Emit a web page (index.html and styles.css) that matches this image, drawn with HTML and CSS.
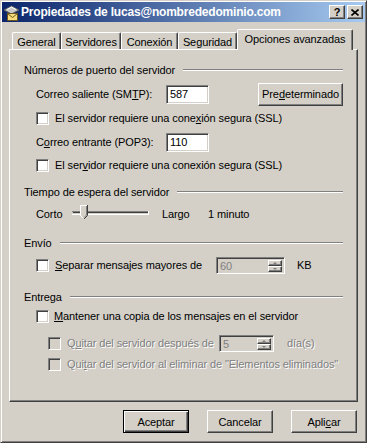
FILE: index.html
```html
<!DOCTYPE html>
<html lang="es">
<head>
<meta charset="utf-8">
<title>Propiedades</title>
<link rel="stylesheet" href="styles.css">
</head>
<body>
<div class="window">
  <div class="titlebar">
    <svg class="ticon" width="17" height="17" viewBox="0 0 17 17">
      <path d="M1 6 L8.5 2 L16 6 L8.5 10 Z" fill="#c8c8c8" stroke="#5a5a5a"/>
      <path d="M4 5.5 L8.5 3.2 L13 5.5" fill="none" stroke="#ffffff"/>
      <rect x="4.5" y="9.5" width="10" height="7" fill="#f6dc7a" stroke="#6a5520"/>
      <path d="M4.5 9.5 L9.5 13.5 L14.5 9.5" fill="none" stroke="#6a5520"/>
    </svg>
    <span class="title">Propiedades de lucas@nombrededominio.com</span>
    <div class="tbtns">
      <span class="tbtn">?</span>
      <span class="tbtn">
        <svg width="8" height="7" viewBox="0 0 8 7"><path d="M0.5 0.5 L7.5 6.5 M7.5 0.5 L0.5 6.5" stroke="#000" stroke-width="1.6"/></svg>
      </span>
    </div>
  </div>

  <div class="tabs">
    <div class="tab w-gen">General</div>
    <div class="tab w-srv">Servidores</div>
    <div class="tab w-con">Conexión</div>
    <div class="tab w-seg">Seguridad</div>
    <div class="tab sel w-opc">Opciones avanzadas</div>
  </div>

  <div class="panel">
    <div class="group">
      <div class="ghead"><span>Números de puerto del servidor</span><i class="gline"></i></div>
      <div class="row h24 mt4 ind1">
        <span class="lbl w130">Correo saliente (SM<u>T</u>P):</span>
        <span class="field">587</span>
        <span class="btn pre">Pre<u>d</u>eterminado</span>
      </div>
      <div class="row h24 ind1">
        <span class="cb"></span><span class="cbl">El servidor requiere una cone<u>x</u>ión segura (SSL)</span>
      </div>
      <div class="row h24 ind1">
        <span class="lbl w130">C<u>o</u>rreo entrante (POP3):</span>
        <span class="field">110</span>
      </div>
      <div class="row h22 ind1">
        <span class="cb"></span><span class="cbl">El ser<u>v</u>idor requiere una conexión segura (SSL)</span>
      </div>
    </div>

    <div class="group mt8">
      <div class="ghead"><span>Tiempo de espera del servidor</span><i class="gline"></i></div>
      <div class="row h28 ind1">
        <span class="lbl w36">Corto</span>
        <svg class="slider" width="77" height="20" viewBox="0 0 77 20">
          <rect x="0" y="7" width="77" height="1" fill="#808080"/>
          <rect x="1" y="8" width="75" height="1" fill="#404040"/>
          <rect x="0" y="10" width="77" height="1" fill="#ffffff"/>
          <rect x="76" y="7" width="1" height="4" fill="#ffffff"/>
          <path d="M8.5 1.5 L15.5 1.5 L15.5 11.5 L12 15 L8.5 11.5 Z" fill="#D4D0C8"/>
          <path d="M8.5 12 L8.5 1.5 L15 1.5" fill="none" stroke="#ffffff"/>
          <path d="M15.5 1 L15.5 11.5 L12 15" fill="none" stroke="#404040"/>
          <path d="M14.5 2 L14.5 11 L12 13.5" fill="none" stroke="#808080"/>
          <path d="M8.5 11.5 L11.5 14.5" fill="none" stroke="#ffffff"/>
        </svg>
        <span class="lbl largo">Largo</span>
        <span class="lbl">1 minuto</span>
      </div>
    </div>

    <div class="group mt7">
      <div class="ghead"><span>Envío</span><i class="gline"></i></div>
      <div class="row h28 ind1">
        <span class="cb"></span><span class="cbl w161"><u>S</u>eparar mensajes mayores de</span>
        <span class="spin w69"><span class="sval">60</span><span class="sbtns"><span class="sb"><i class="up"></i></span><span class="sb"><i class="dn"></i></span></span></span>
        <span class="unit kb">KB</span>
      </div>
    </div>

    <div class="group mt10">
      <div class="ghead"><span>Entrega</span><i class="gline"></i></div>
      <div class="row h22 ind1">
        <span class="cb"></span><span class="cbl m5"><u>M</u>antener una copia de los mensajes en el servidor</span>
      </div>
      <div class="row h24 mt4 ind2">
        <span class="cb dis"></span><span class="cbl w152 off">Q<u>u</u>itar del servidor después de</span>
        <span class="spin w55"><span class="sval">5</span><span class="sbtns"><span class="sb"><i class="up"></i></span><span class="sb"><i class="dn"></i></span></span></span>
        <span class="unit dias off">día(s)</span>
      </div>
      <div class="row h18 ind2">
        <span class="cb dis"></span><span class="cbl off">Qui<u>t</u>ar del servidor al eliminar de "Elementos eliminados"</span>
      </div>
    </div>
  </div>

  <div class="actions">
    <span class="btn act def">Aceptar</span>
    <span class="btn act">Cancelar</span>
    <span class="btn act">Apli<u>c</u>ar</span>
  </div>
</div>
</body>
</html>
```

FILE: styles.css
```css
* { box-sizing: border-box; }

body {
  margin: 0;
  background: #D4D0C8;
  font: 11px "Liberation Sans", Arial, sans-serif;
  letter-spacing: -0.1px;
  color: #000;
}

.window {
  width: 367px;
  height: 443px;
  background: #D4D0C8;
  border: 1px solid;
  border-color: #D4D0C8 #404040 #404040 #D4D0C8;
  box-shadow: inset 1px 1px #fff, inset -1px -1px #808080;
  padding: 1px;
  display: flex;
  flex-direction: column;
}

/* title bar */
.titlebar {
  height: 20px;
  flex: none;
  background: linear-gradient(to right, #0A246A, #A6CAF0);
  display: flex;
  align-items: center;
  padding: 0 2px 0 1px;
  color: #fff;
}
.ticon { flex: none; margin-right: 1px; }
.title {
  flex: 1;
  font-weight: bold;
  font-size: 12px;
  letter-spacing: -0.2px;
  white-space: nowrap;
}
.tbtns { display: flex; gap: 2px; }
.tbtn {
  width: 16px;
  height: 14px;
  background: #D4D0C8;
  border: 1px solid;
  border-color: #fff #404040 #404040 #fff;
  box-shadow: inset -1px -1px #808080;
  display: flex;
  align-items: center;
  justify-content: center;
  color: #000;
  font-weight: bold;
  font-size: 11px;
  letter-spacing: 0;
  line-height: 1;
}

/* tabs */
.tabs {
  height: 27px;
  flex: none;
  display: flex;
  align-items: flex-end;
  padding-left: 10px;
}
.tab {
  height: 17px;
  border: 1px solid;
  border-bottom: none;
  border-color: #fff #404040 transparent #fff;
  box-shadow: inset -1px 0 #808080;
  border-radius: 2px 2px 0 0;
  display: flex;
  align-items: center;
  justify-content: center;
  padding-top: 2px;
  white-space: nowrap;
}
.tab.sel {
  height: 21px;
  margin-bottom: -1px;
  padding-top: 0;
  padding-bottom: 2px;
  position: relative;
  z-index: 1;
  background: #D4D0C8;
}
.w-gen { width: 49px; }
.w-srv { width: 60px; }
.w-con { width: 57px; }
.w-seg { width: 59px; }
.w-opc { width: 116px; }

/* panel */
.panel {
  flex: none;
  margin-left: 7px;
  width: 349px;
  height: 353px;
  border: 1px solid;
  border-color: #fff #404040 #404040 #fff;
  box-shadow: inset -1px -1px #808080;
  padding: 12px 14px 0 14px;
}

.ghead {
  height: 16px;
  display: flex;
  align-items: center;
}
.gline {
  flex: 1;
  height: 2px;
  margin-left: 8px;
  border-top: 1px solid #808080;
  border-bottom: 1px solid #fff;
}

.row {
  display: flex;
  align-items: center;
  white-space: nowrap;
}
.h18 { height: 18px; }
.h22 { height: 22px; }
.h24 { height: 24px; }
.h28 { height: 28px; }
.mt4 { margin-top: 4px; }
.mt7 { margin-top: 7px; }
.mt8 { margin-top: 8px; }
.mt10 { margin-top: 10px; }
.ind1 { padding-left: 12px; }
.ind2 { padding-left: 24px; }

.w36 { width: 36px; flex: none; }
.w130 { width: 130px; flex: none; }
.w152 { width: 152px; flex: none; }
.w161 { width: 161px; flex: none; }

.field {
  width: 43px;
  height: 19px;
  background: #fff;
  border: 1px solid;
  border-color: #808080 #fff #fff #808080;
  box-shadow: inset 1px 1px #404040, inset -1px -1px #D4D0C8;
  padding: 0 3px;
  display: flex;
  align-items: center;
}

.btn {
  display: flex;
  align-items: center;
  justify-content: center;
  background: #D4D0C8;
  border: 1px solid;
  border-color: #fff #404040 #404040 #fff;
  box-shadow: inset -1px -1px #808080;
}
.pre {
  width: 85px;
  height: 23px;
  margin-left: auto;
}

.cb {
  flex: none;
  width: 13px;
  height: 13px;
  background: #fff;
  border: 1px solid;
  border-color: #808080 #fff #fff #808080;
  box-shadow: inset 1px 1px #404040, inset -1px -1px #D4D0C8;
}
.cb.dis { background: #D4D0C8; }
.cbl { margin-left: 6px; }
.cbl.m5 { margin-left: 5px; }
.off {
  color: #808080;
  text-shadow: 1px 1px #fff;
}

.slider { flex: none; }
.largo { margin-left: 13px; width: 46px; }

.spin {
  flex: none;
  height: 17px;
  display: flex;
  background: #D4D0C8;
  border: 1px solid;
  border-color: #808080 #fff #fff #808080;
  box-shadow: inset 1px 1px #404040, inset -1px -1px #D4D0C8;
  padding: 2px 2px 1px 2px;
  color: #808080;
}
.w69 { width: 69px; }
.w55 { width: 55px; }
.sval { flex: 1; display: flex; align-items: center; padding-left: 1px; }
.sbtns {
  width: 14px;
  display: flex;
  flex-direction: column;
}
.sb {
  flex: 1;
  display: flex;
  align-items: center;
  justify-content: center;
  background: #D4D0C8;
  border: 1px solid;
  border-color: #fff #404040 #404040 #fff;
  box-shadow: inset -1px -1px #808080;
}
.sb i {
  width: 0;
  height: 0;
  border-left: 2px solid transparent;
  border-right: 2px solid transparent;
}
.sb i.up { border-bottom: 2px solid #808080; }
.sb i.dn { border-top: 2px solid #808080; }
.unit.kb { margin-left: 12px; }
.unit.dias { margin-left: 13px; }

/* dialog buttons */
.actions {
  flex: none;
  margin-top: 8px;
  display: flex;
  justify-content: flex-end;
  gap: 18px;
  padding-right: 8px;
}
.act {
  width: 66px;
  height: 23px;
}
.act.def {
  border-color: #000;
  box-shadow: inset 1px 1px #fff, inset -1px -1px #404040, inset -2px -2px #808080;
}
```
